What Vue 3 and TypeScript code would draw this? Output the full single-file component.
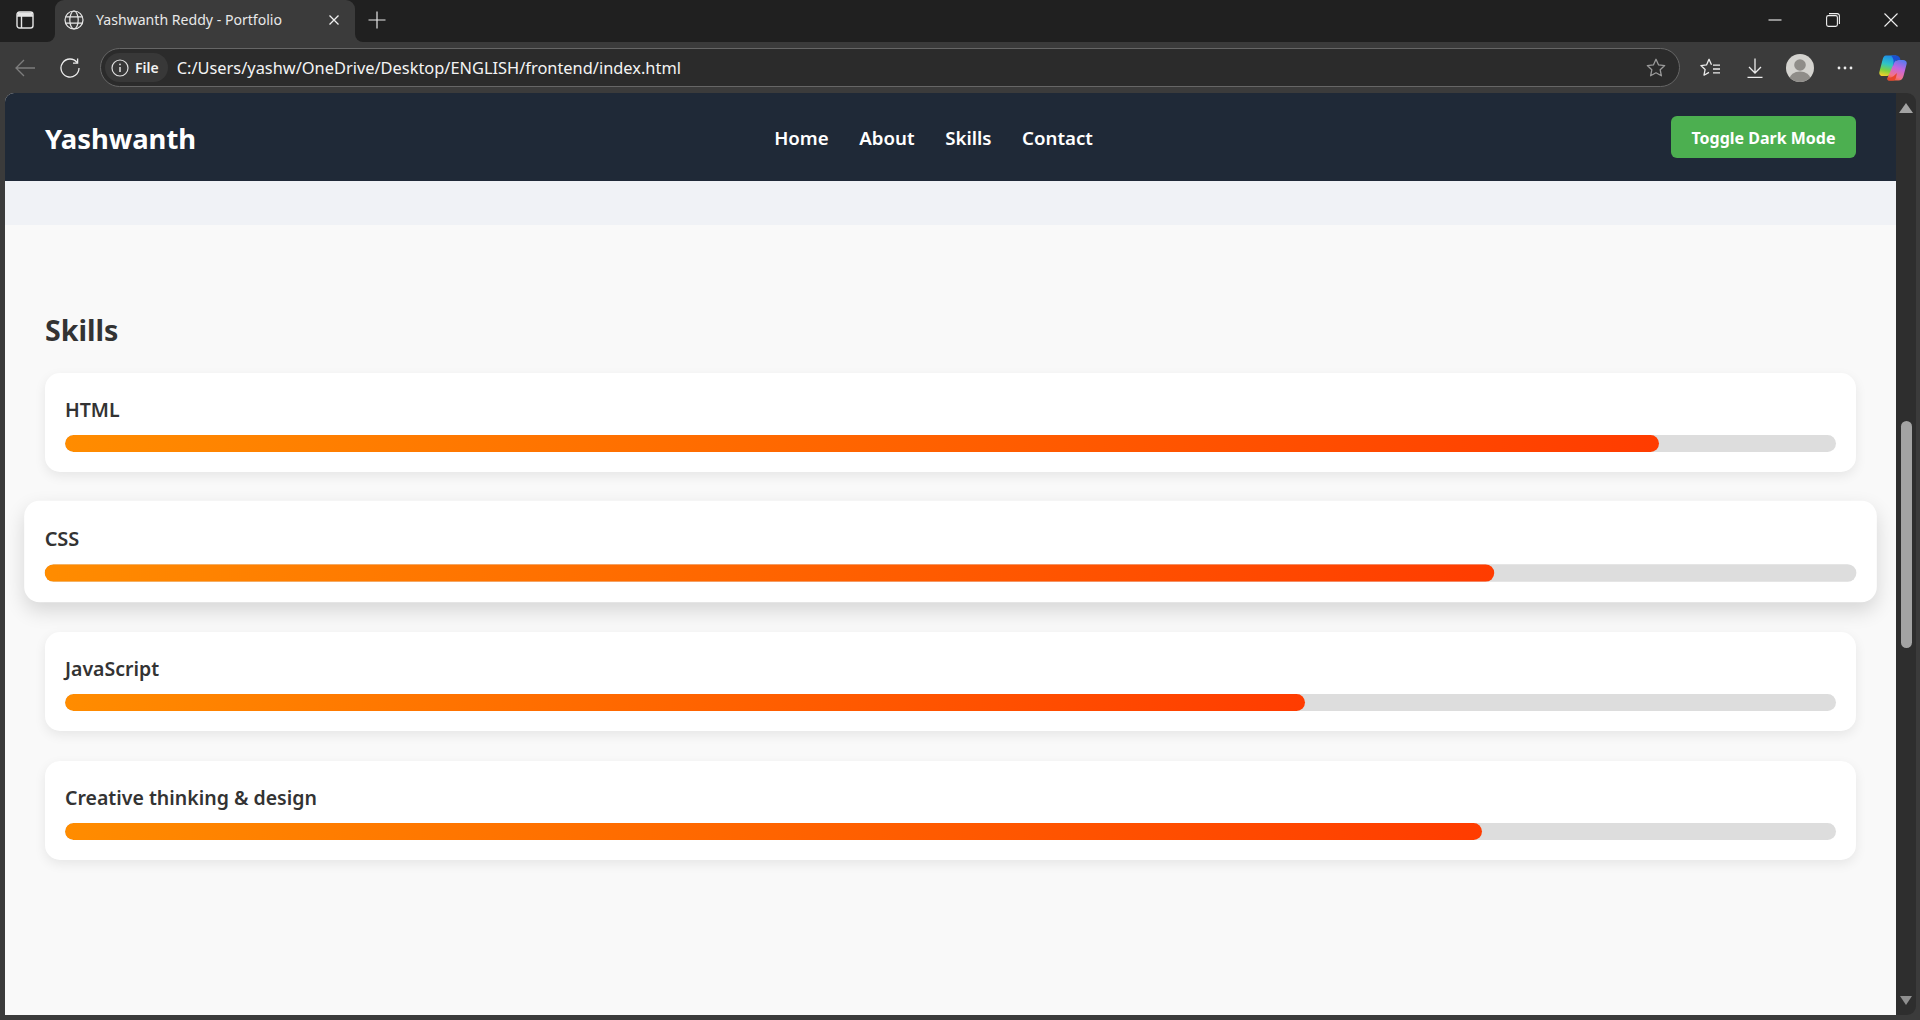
<script setup lang="ts">
interface Skill {
  name: string
  level: number
  active?: boolean
}

const links: string[] = ['Home', 'About', 'Skills', 'Contact']

const skills: Skill[] = [
  { name: 'HTML', level: 90 },
  { name: 'CSS', level: 80, active: true },
  { name: 'JavaScript', level: 70 },
  { name: 'Creative thinking & design', level: 80 }
]
</script>

<template>
  <div class="window">
    <!-- tab strip -->
    <div class="titlebar">
      <div class="tab-side">
        <svg width="18" height="18" viewBox="0 0 18 18" fill="none" stroke="#e6e6e6" stroke-width="1.4">
          <rect x="1" y="1" width="16" height="16" rx="2.5" />
          <path d="M1 5h16M5.5 5v12" />
          <path d="M1.5 1.5h15v3.5h-15z" fill="#e6e6e6" stroke="none" />
        </svg>
      </div>
      <div class="tab-wrap">
        <div class="tab">
          <svg width="20" height="20" viewBox="0 0 20 20" fill="none" stroke="#e8e8e8" stroke-width="1.2">
            <circle cx="10" cy="10" r="9" />
            <ellipse cx="10" cy="10" rx="4.2" ry="9" />
            <path d="M1.6 6.8h16.8M1.6 13.2h16.8" />
          </svg>
          <span class="tab-title">Yashwanth Reddy - Portfolio</span>
          <svg class="tab-close" width="12" height="12" viewBox="0 0 12 12" stroke="#f0f0f0" stroke-width="1.3">
            <path d="M1.5 1.5l9 9M10.5 1.5l-9 9" />
          </svg>
        </div>
      </div>
      <div class="tab-rest">
        <svg class="new-tab" width="18" height="18" viewBox="0 0 18 18" stroke="#e8e8e8" stroke-width="1.2">
          <path d="M9 0.5v17M0.5 9h17" />
        </svg>
        <div class="win-controls">
          <svg width="58" height="14" viewBox="0 0 14 14" stroke="#f0f0f0" stroke-width="1.1" fill="none">
            <path d="M0.5 7h13" />
          </svg>
          <svg width="58" height="14" viewBox="0 0 14 14" stroke="#f0f0f0" stroke-width="1.1" fill="none">
            <rect x="0.6" y="2.6" width="10.8" height="10.8" rx="1.8" />
            <path d="M3 0.6h8.2a2.2 2.2 0 0 1 2.2 2.2v8.2" />
          </svg>
          <svg width="58" height="14" viewBox="0 0 14 14" stroke="#f0f0f0" stroke-width="1.1" fill="none">
            <path d="M0.5 0.5l13 13M13.5 0.5l-13 13" />
          </svg>
        </div>
      </div>
    </div>

    <!-- address bar row -->
    <div class="toolbar">
      <div class="tool-btn">
        <svg width="20" height="18" viewBox="0 0 20 18" fill="none" stroke="#7d7d7d" stroke-width="1.3">
          <path d="M20 9H1M9 1L1 9l8 8" />
        </svg>
      </div>
      <div class="tool-btn reload">
        <svg width="20" height="20" viewBox="0 0 20 20" fill="none" stroke="#ececec" stroke-width="1.3">
          <path d="M17.2 4.6A9 9 0 1 0 19 10" />
          <path d="M17.6 0.6v4.6h-4.6" />
        </svg>
      </div>
      <div class="address">
        <div class="site-pill">
          <svg width="18" height="18" viewBox="0 0 18 18" fill="none" stroke="#e0e0e0" stroke-width="1.2">
            <circle cx="9" cy="9" r="8" />
            <path d="M9 8v5" stroke-width="1.5" />
            <circle cx="9" cy="5.4" r="0.9" fill="#e0e0e0" stroke="none" />
          </svg>
          <span>File</span>
        </div>
        <span class="url">C:/Users/yashw/OneDrive/Desktop/ENGLISH/frontend/index.html</span>
        <svg class="addr-star" width="20" height="20" viewBox="0 0 20 20" fill="none" stroke="#9a9a9a" stroke-width="1.3" stroke-linejoin="round">
          <path d="M10 1.3l2.6 5.6 6.1.7-4.500 4.200 1.200 6-5.400-3-5.400 3 1.200-6L1.300 7.600l6.100-.7z" />
        </svg>
      </div>
      <div class="tool-icons">
        <svg width="20" height="20" viewBox="0 0 20 20" fill="none" stroke="#ececec" stroke-width="1.3" stroke-linejoin="round">
          <path d="M11.500 6.800L9 1.300 6.500 6.900 0.900 7.600l4.200 3.900-1.100 5.700 5-2.800" />
          <path d="M13 7.200h7M13 11h7M13 14.800h7" />
        </svg>
        <svg width="16" height="20" viewBox="0 0 16 20" fill="none" stroke="#ececec" stroke-width="1.3">
          <path d="M8 0.500v14M2 9l6 6 6-6M0.500 19.300h15" />
        </svg>
        <svg class="avatar" width="28" height="28" viewBox="0 0 28 28">
          <defs>
            <clipPath id="avatar-clip"><circle cx="14" cy="14" r="14" /></clipPath>
          </defs>
          <circle cx="14" cy="14" r="14" fill="#d4d3cf" />
          <g clip-path="url(#avatar-clip)" fill="#8f8d89">
            <circle cx="14" cy="11" r="5.800" />
            <ellipse cx="14" cy="25" rx="10.500" ry="7.500" />
          </g>
        </svg>
        <svg width="16" height="4" viewBox="0 0 16 4" fill="#ececec">
          <circle cx="2" cy="2" r="1.400" />
          <circle cx="8" cy="2" r="1.400" />
          <circle cx="14" cy="2" r="1.400" />
        </svg>
        <svg class="copilot" width="28" height="28" viewBox="0 0 28 28">
          <defs>
            <linearGradient id="cp-a" x1="0.45" y1="0" x2="0.25" y2="1">
              <stop offset="0" stop-color="#1f8fe8" />
              <stop offset="0.4" stop-color="#2fc4c8" />
              <stop offset="0.72" stop-color="#7fd23e" />
              <stop offset="1" stop-color="#f7cf2a" />
            </linearGradient>
            <linearGradient id="cp-b" x1="0.7" y1="0" x2="0.35" y2="1">
              <stop offset="0" stop-color="#5b7af0" />
              <stop offset="0.4" stop-color="#c266e0" />
              <stop offset="0.8" stop-color="#f2728e" />
              <stop offset="1" stop-color="#f6603c" />
            </linearGradient>
          </defs>
          <path d="M7 1.500h9c2 0 2.500 1 1.800 3L12 19c-.8 2-2 3-4 3H4c-3 0-4.300-2-3.500-4.500L3.500 6C4.300 3 5 1.500 7 1.500z" fill="url(#cp-a)" />
          <path d="M20 6h4c3 0 4.300 2 3.500 4.500L24.500 22c-.8 3-2.500 4.500-5 4.500h-9c-2 0-2.500-1-1.800-3L15 9c.8-2 2.500-3 5-3z" fill="url(#cp-b)" />
          <path d="M12 1.500h5c2.500 0 4 1.500 4.500 4.500H19c-2 0-3.400 1-4 3l-1.200 3.500c1-4 1.700-7.500-1.800-11z" fill="#1b4fd0" />
          <path d="M8.700 23.500c-.4 1.600.3 3 1.800 3H14c1.500 0 2.500-1 3-3l1-4.500-3.500 3.300c-1.500 1.200-3.500 1.500-5.800 1.200z" fill="#e8452c" />
        </svg>
      </div>
    </div>

    <!-- page viewport -->
    <div class="viewport">
      <div class="page">
        <header class="site-header">
          <div class="logo">Yashwanth</div>
          <nav class="nav">
            <a v-for="link in links" :key="link" class="nav-link">{{ link }}</a>
          </nav>
          <button type="button" class="theme-btn">Toggle Dark Mode</button>
        </header>
        <div class="band"></div>
        <section class="skills">
          <h2 class="skills-title">Skills</h2>
          <div
            v-for="skill in skills"
            :key="skill.name"
            :class="['skill-card', { 'skill-card-active': skill.active }]"
          >
            <div class="skill-name">{{ skill.name }}</div>
            <div class="skill-track">
              <div class="skill-fill" :style="{ width: skill.level + '%' }"></div>
            </div>
          </div>
        </section>
      </div>
      <div class="scrollbar">
        <div class="arrow-up"></div>
        <div class="thumb"></div>
        <div class="arrow-down"></div>
      </div>
    </div>
  </div>
</template>

<style>
html,
body {
  margin: 0;
  overflow: hidden;
  background: #3b3b3b;
}
</style>

<style scoped>
.window {
  width: 1920px;
  height: 1020px;
  display: flex;
  flex-direction: column;
  background: #3b3b3b;
  font-family: "Noto Sans", "Open Sans", sans-serif;
  overflow: hidden;
}

/* Tab strip */
.titlebar {
  height: 42px;
  display: flex;
  flex: none;
}

.tab-side {
  width: 55px;
  display: flex;
  align-items: center;
  padding: 0 0 2px 16px;
  box-sizing: border-box;
  background: #202020;
  border-bottom-right-radius: 8px;
}

.tab-wrap {
  width: 300px;
  background: #202020;
}

.tab {
  height: 100%;
  display: flex;
  align-items: center;
  padding: 0 15px 2px 9px;
  box-sizing: border-box;
  background: #3b3b3b;
  border-radius: 9px 9px 0 0;
  color: #e8e8e8;
}

.tab-title {
  margin-left: 12px;
  padding-bottom: 2px;
  font-size: 14.1px;
  white-space: nowrap;
}

.tab-close {
  margin-left: auto;
}

.tab-rest {
  flex: 1;
  display: flex;
  align-items: center;
  padding: 0 0 2px 13px;
  background: #202020;
  border-bottom-left-radius: 8px;
}

.win-controls {
  margin-left: auto;
  display: flex;
}

/* Address row */
.toolbar {
  height: 51px;
  flex: none;
  display: flex;
  align-items: center;
}

.tool-btn {
  width: 45px;
  display: flex;
  justify-content: center;
  padding-left: 5px;
  box-sizing: border-box;
  flex: none;
}

.tool-btn.reload {
  width: 50px;
  padding-left: 0;
}

.address {
  width: 1580px;
  height: 39px;
  margin-left: 5px;
  display: flex;
  align-items: center;
  flex: none;
  box-sizing: border-box;
  padding: 0 13px 0 4px;
  background: #2b2b2b;
  border: 1px solid #666;
  border-radius: 20px;
}

.site-pill {
  height: 29px;
  display: flex;
  align-items: center;
  gap: 6px;
  padding: 0 9px 0 6px;
  background: #383838;
  border-radius: 15px;
  color: #f2f2f2;
  font-size: 14px;
  font-weight: 600;
}

.url {
  margin-left: 9px;
  color: #f4f4f4;
  font-size: 16.4px;
  white-space: nowrap;
}

.addr-star {
  margin-left: auto;
}

.tool-icons {
  display: flex;
  align-items: center;
  margin-left: 20px;
}

.tool-icons svg {
  flex: none;
}

.tool-icons svg:nth-child(2) {
  margin-left: 27px;
}

.avatar {
  margin-left: 23px;
}

.tool-icons svg:nth-child(4) {
  margin-left: 23px;
}

.copilot {
  margin-left: 26px;
}

/* Page */
.viewport {
  height: 922px;
  flex: none;
  display: flex;
  margin: 0 4px 0 5px;
}

.page {
  width: 1891px;
  height: 100%;
  flex: none;
  overflow: hidden;
  background: #f9f9f9;
  border-top-left-radius: 9px;
}

.site-header {
  height: 88px;
  display: flex;
  align-items: center;
  justify-content: space-between;
  padding: 2px 40px 0;
  box-sizing: border-box;
  background: #1f2937;
}

.logo {
  color: #fff;
  font-size: 27.4px;
  font-weight: 700;
}

.nav {
  display: flex;
  gap: 30.6px;
  margin-top: -2px;
}

.nav-link {
  color: #fff;
  font-size: 18.7px;
  font-weight: 600;
}

.theme-btn {
  height: 42px;
  width: 185px;
  margin-top: -2px;
  padding: 2px 0 0;
  border: none;
  border-radius: 6px;
  background: #4caf50;
  color: #fff;
  font-family: inherit;
  font-size: 16px;
  font-weight: 700;
}

.band {
  height: 44px;
  background: #f0f2f6;
}

.skills {
  padding: 85px 40px 0;
}

.skills-title {
  margin: 0 0 24px;
  color: #333;
  font-size: 28.6px;
  line-height: 39px;
  font-weight: 700;
}

.skill-card {
  height: 99.3px;
  box-sizing: border-box;
  margin-bottom: 30.1px;
  padding: 20px;
  background: #fff;
  border-radius: 15px;
  box-shadow: 0 4px 12px rgba(0, 0, 0, 0.08);
}

.skill-card-active {
  transform: scale(1.023);
  box-shadow: 0 8px 20px rgba(0, 0, 0, 0.14);
}

.skill-name {
  height: 26px;
  margin-bottom: 16px;
  color: #333;
  font-size: 19.5px;
  line-height: 33px;
  font-weight: 600;
}

.skill-track {
  height: 17px;
  background: #ddd;
  border-radius: 10px;
  overflow: hidden;
}

.skill-fill {
  height: 100%;
  background: linear-gradient(90deg, #ff8c00, #ff3c00);
  border-radius: 10px;
}

/* Scrollbar */
.scrollbar {
  width: 20px;
  height: 100%;
  flex: none;
  display: flex;
  flex-direction: column;
  align-items: center;
  background: #2e2e2e;
  border-radius: 0 9px 9px 0;
}

.arrow-up {
  margin-top: 10px;
  width: 0;
  height: 0;
  border-left: 7px solid transparent;
  border-right: 7px solid transparent;
  border-bottom: 10px solid #a3a3a3;
}

.thumb {
  width: 11px;
  height: 227px;
  margin-top: 308px;
  background: #a3a3a3;
  border-radius: 6px;
}

.arrow-down {
  margin-top: auto;
  margin-bottom: 10px;
  width: 0;
  height: 0;
  border-left: 6px solid transparent;
  border-right: 6px solid transparent;
  border-top: 9px solid #8f8f8f;
}
</style>
